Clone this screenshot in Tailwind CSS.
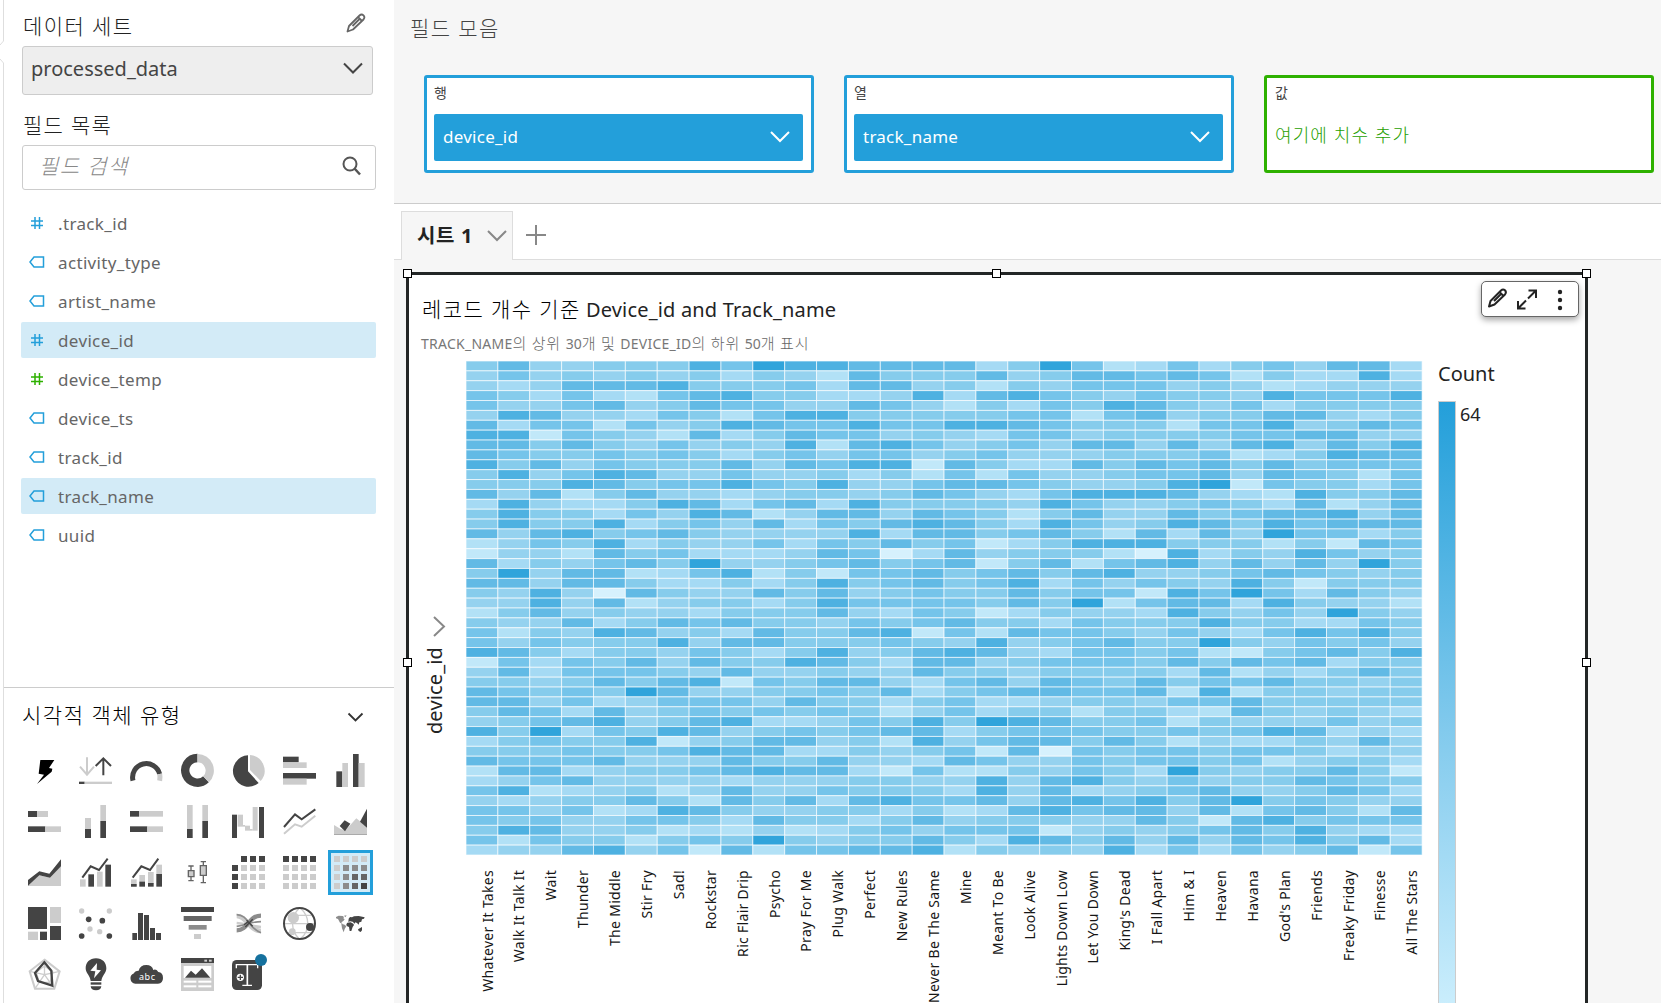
<!DOCTYPE html>
<html lang="ko">
<head>
<meta charset="utf-8">
<title>Analysis</title>
<script src="https://cdn.jsdelivr.net/npm/@tailwindcss/browser@4"></script>
</head>
<body class="w-[1661px] h-[1003px] overflow-hidden bg-white flex font-['Noto_Sans','Noto_Sans_CJK_KR',sans-serif] text-[#232323]">

<!-- Left panel -->
<aside class="relative w-[394px] h-full shrink-0 flex flex-col">
  <svg class="absolute left-0 top-0" width="6" height="1003" fill="none" stroke="#dedede"><path d="M3.5 0V41L0 45M0 59L3.5 63V1003"/></svg>

  <section class="h-[687px] pl-[22px] flex flex-col">
    <div class="h-[46px] pl-px pr-[28px] flex items-center justify-between">
      <h2 class="text-[21px] leading-none font-light tracking-[1.4px] text-[#222] mt-1.5">데이터 세트</h2>
      <svg width="20" height="20" class="-mt-px" fill="none" stroke="#666" stroke-width="1.800" stroke-linejoin="round"><path d="M1.5 18.5L3 13L13.500 2.500Q15.500 0.500 17.500 2.300Q19.300 4.200 17.500 6.500L7 16.500ZM12.500 4.500L15.500 7.500M6.500 13L13.500 6"/></svg>
    </div>
    <button class="w-[351px] h-[49px] border border-[#ccc] rounded-[3px] bg-[#eee] flex items-center justify-between pl-[8px] pr-[9px]">
      <span class="text-[20px] leading-none text-[#444] -mt-1">processed_data</span>
      <svg width="20" height="13" class="-mt-1" fill="none" stroke="#444" stroke-width="2"><path d="M1 1.500L10 10.500L19 1.500"/></svg>
    </button>
    <h2 class="h-[50px] pl-px pt-[20px] text-[21px] leading-none font-light tracking-[1.3px] text-[#222]">필드 목록</h2>
    <div class="w-[354px] h-[45px] border border-[#ccc] rounded-[3px] flex items-center justify-between pl-4 pr-[14px]">
      <span class="text-[21px] leading-none font-light italic tracking-[1.4px] text-[#888] -mt-0.5">필드 검색</span>
      <svg width="19" height="20" class="-mt-1" fill="none" stroke="#555" stroke-width="2"><circle cx="8" cy="8" r="6.500"/><path d="M12.500 12.500L18 18.500" stroke-width="2.500"/></svg>
    </div>
    <ul id="fields" class="mt-[15px] -ml-px w-[355px] flex flex-col gap-[3px] text-[17px] text-[#666]"></ul>
  </section>

  <section class="ml-1 border-t border-[#ccc] flex-1 flex flex-col">
    <div class="h-[60px] pl-[18px] pr-[30px] flex items-center justify-between">
      <h2 class="text-[21px] leading-none font-light tracking-[1.5px] text-black -mt-[5px]">시각적 객체 유형</h2>
      <svg width="17" height="11" class="-mt-px" fill="none" stroke="#333" stroke-width="1.800"><path d="M1.500 1.500L8.500 8.500L15.500 1.500"/></svg>
    </div>
    <div id="types" class="ml-[18px] w-[357px] grid grid-cols-7"></div>
  </section>
</aside>

<!-- Workspace -->
<main class="flex-1 h-full flex flex-col bg-[#f6f6f6]">
  <header class="h-[204px] shrink-0 border-b border-[#ccc] pl-[30px] pr-[7px]">
    <h2 class="h-[75px] pt-[18px] -ml-[14px] text-[21px] leading-none font-light tracking-[1.4px] text-[#444]">필드 모음</h2>
    <div class="grid grid-cols-3 gap-[30px]">
      <div class="h-[98px] border-[3px] border-[#239fda] rounded-[3px] bg-white px-[7px]">
        <div class="h-9 pt-[6px] text-[14px] leading-[17px] text-[#444]">행</div>
        <div class="h-[47px] w-[369px] rounded-[2px] bg-[#239fda] text-white flex items-center justify-between pl-[9px] pr-[13px]">
          <span class="text-[17px] leading-none tracking-[0.25px] -mt-0.5">device_id</span>
          <svg width="20" height="12" fill="none" stroke="#fff" stroke-width="2" class="-mt-0.5"><path d="M1 1L10 10L19 1"/></svg>
        </div>
      </div>
      <div class="h-[98px] border-[3px] border-[#239fda] rounded-[3px] bg-white px-[7px]">
        <div class="h-9 pt-[6px] text-[14px] leading-[17px] text-[#444]">열</div>
        <div class="h-[47px] w-[369px] rounded-[2px] bg-[#239fda] text-white flex items-center justify-between pl-[9px] pr-[13px]">
          <span class="text-[17px] leading-none tracking-[0.25px] -mt-0.5">track_name</span>
          <svg width="20" height="12" fill="none" stroke="#fff" stroke-width="2" class="-mt-0.5"><path d="M1 1L10 10L19 1"/></svg>
        </div>
      </div>
      <div class="h-[98px] border-[3px] border-[#2eb100] rounded-[3px] bg-white px-[7px]">
        <div class="h-9 pt-[6px] pl-px text-[14px] leading-[17px] text-[#444]">값</div>
        <div class="h-[47px] flex items-center pl-px text-[18px] leading-none font-light tracking-[1.1px] text-[#26a000]"><span class="-mt-1.5">여기에 치수 추가</span></div>
      </div>
    </div>
  </header>

  <nav class="h-[56px] shrink-0 bg-white border-b border-[#ddd] flex items-end pl-[7px]">
    <div class="w-[112px] h-[49px] -mb-px bg-[#f6f6f6] border border-b-0 border-[#ddd] flex items-center justify-between pl-[15px] pr-[5px]">
      <span class="text-[20px] leading-none font-bold tracking-[0.7px] whitespace-nowrap">시트 1</span>
      <svg width="20" height="12" fill="none" stroke="#888" stroke-width="2"><path d="M1 1L10 10L19 1"/></svg>
    </div>
    <svg class="ml-[13px] mb-[14px]" width="20" height="20" stroke="#888" stroke-width="2"><path d="M10 0V20M0 10H20"/></svg>
  </nav>

  <section class="relative mt-3 ml-3 w-[1182px] h-[740px] shrink-0 border-[3px] border-b-0 border-[#232626] bg-white">
    <i class="absolute left-[-6px] top-[-6px] size-[9px] border border-black bg-white"></i>
    <i class="absolute left-[583px] top-[-6px] size-[9px] border border-black bg-white"></i>
    <i class="absolute right-[-6px] top-[-6px] size-[9px] border border-black bg-white"></i>
    <i class="absolute left-[-6px] top-[383px] size-[9px] border border-black bg-white"></i>
    <i class="absolute right-[-6px] top-[383px] size-[9px] border border-black bg-white"></i>

    <div class="absolute right-[6px] top-[6px] w-[98px] h-9 rounded-[5px] border border-[#666] bg-white shadow-[0_3px_6px_rgba(0,0,0,0.35)] flex items-center">
      <svg width="96" height="34" fill="none" stroke="#232323" stroke-width="2"><path stroke-linejoin="round" d="M7 24.500L8.500 19L19 8.500Q21 6.500 23 8.300Q24.800 10.200 23 12.500L12.500 22.500ZM18 10.500L21 13.500M12 19L19 12"/><path d="M46.500 8.500H54V16M53.500 9L46 16.500M36 19V26.500H43.500M36.500 26L44 18.500"/><g fill="#232323" stroke="none"><circle cx="78" cy="10" r="2.200"/><circle cx="78" cy="18" r="2.200"/><circle cx="78" cy="26" r="2.200"/></g></svg>
    </div>

    <h3 class="h-[52px] pt-[24px] pl-[13px] text-[20px] leading-none whitespace-nowrap"><span class="font-light text-[21px] tracking-[1.4px] text-black">레코드 개수 기준</span> <span class="tracking-[0.17px]">Device_id and Track_name</span></h3>
    <p class="h-[34px] pt-[9px] pl-3 text-[14px] leading-none whitespace-nowrap text-[#777]"><span class="tracking-[0.25px]">TRACK_NAME</span><span class="text-[15px] tracking-[0.8px] font-light text-[#666]">의 상위 </span>30<span class="text-[15px] tracking-[0.8px] font-light text-[#666]">개 및 </span><span class="tracking-[0.25px]">DEVICE_ID</span><span class="text-[15px] tracking-[0.8px] font-light text-[#666]">의 하위 </span>50<span class="text-[15px] tracking-[0.8px] font-light text-[#666]">개 표시</span></p>
    <svg id="chart" class="block" width="1176" height="650"></svg>
  </section>
</main>

<script>
const HASH = c => `<svg width="14" height="14" fill="none" stroke="${c}" stroke-width="1.500"><path d="M5 1V13M9.500 1V13M1 5H13M1 9.500H13"/></svg>`;
const TAG = `<svg width="16" height="12" fill="none" stroke="#239fda" stroke-width="1.500"><path d="M5 1H14.500V11H5L1 6Z"/></svg>`;
const FIELDS = [['.track_id','b'],['activity_type','t'],['artist_name','t'],['device_id','b',1],['device_temp','g'],['device_ts','t'],['track_id','t'],['track_name','t',1],['uuid','t']];
document.getElementById('fields').innerHTML = FIELDS.map(([n,k,on]) =>
  `<li class="h-9 flex items-center rounded-[2px] ${on ? 'bg-[#d3ebf7]' : ''}"><span class="w-[37px] flex justify-start ${k==='t' ? 'pl-2' : 'pl-[9px]'}">${k==='t' ? TAG : HASH(k==='g' ? '#2eb100' : '#239fda')}</span><span class="leading-none tracking-[0.35px] pt-px">${n}</span></li>`).join('');

const D='#444', L='#ccc', M='#8c8c8c', K='#646464';
const r=(x,y,w,h,c)=>`<rect x="${x}" y="${y}" width="${w}" height="${h}" fill="${c}"/>`;
const ci=(x,y,q,c)=>`<circle cx="${x}" cy="${y}" r="${q}" fill="${c}"/>`;
const ln=(d,c,w)=>`<path d="${d}" fill="none" stroke="${c}" stroke-width="${w}"/>`;
const pa=(d,c)=>`<path d="${d}" fill="${c}"/>`;
const grid=f=>{let s='';for(let y=0;y<4;y++)for(let x=0;x<4;x++){const c=f(y,x);if(c)s+=r(x*27,y*27,18,18,c);}return s;};
const ICONS=[
 pa('M37 18H79L63 42L73 44L71 53L27 90L48 62L32 59Z','#000'),
 ln('M24 10V62M3 38L24 62L45 38',L,6)+ln('M73 64V14M50 36L73 13L96 36',D,6)+r(0,83,17,7,D)+r(17,83,82,7,L),
 ln('M9 80A41 41 0 1 1 89 60',D,15)+ln('M89 60Q91 70 89 80',L,15),
 ln('M49.500 12A37 37 0 1 0 75 76',D,25)+ln('M49.500 12.500A37 37 0 0 1 75 76',L,25),
 pa('M48 4A47 47 0 1 0 80 87L48 52Z',D)+pa('M54 3A47 47 0 0 1 86 81L54 48Z',L),
 r(0,8,47,17,D)+r(0,25,71,17,L)+r(0,57,99,17,D)+r(0,74,71,18,L),
 r(7,52,18,47,D)+r(25,27,17,72,L)+r(57,0,17,99,D)+r(74,27,18,72,L),
 r(0,18,27,18,D)+r(27,18,33,18,L)+r(0,64,52,17,D)+r(52,64,47,17,L),
 r(18,39,18,33,L)+r(18,72,18,27,D)+r(64,0,17,48,L)+r(64,48,17,51,D),
 r(0,18,27,17,D)+r(27,18,72,17,L)+r(0,64,52,17,D)+r(52,64,47,17,L),
 r(18,0,17,72,L)+r(18,72,17,27,D)+r(64,0,17,48,L)+r(64,48,17,51,D),
 r(0,29,15,70,D)+r(17,29,16,36,L)+r(33,60,6,5,L)+r(39,62,15,15,L)+r(54,72,8,5,L)+r(62,6,15,71,L)+r(81,6,15,93,D),
 ln('M3 86L36 58L56 65L97 32',L,6)+ln('M3 66L36 28L56 43L97 13',D,6),
 pa('M0 60L20 72L35 76L67 40L99 66V90H0Z',L)+pa('M17 63L32 46L49 56L33 79Z',D)+pa('M78 50L99 11V68Z',D)+r(0,87,99,3,'#aaa'),
 pa('M0 88L34 58L66 65L99 30V90H0Z',L)+pa('M0 72L34 46L64 53L99 10V31L66 65L34 58L0 89Z',D),
 r(3,70,17,22,L)+r(28,55,17,37,D)+r(54,47,17,45,L)+r(79,26,17,66,D)+ln('M10 65L35 31L60 42L86 8',D,6),
 r(3,70,17,22,L)+r(3,84,17,8,D)+r(28,57,17,22,L)+r(28,77,17,15,D)+r(54,48,17,35,L)+r(54,81,17,11,D)+r(79,26,17,30,L)+r(79,54,17,38,D)+ln('M8 65L34 31L60 42L85 8',D,6),
 ln('M30 30V74M22 30H38M22 74H38M67 17V80M59 17H75M59 80H75',K,4)+`<g fill="#ccc" stroke="#646464" stroke-width="4"><path d="M22 44H39V62H22ZM58 29H76V58H58Z"/></g>`,
 grid((y,x)=>y==0&&x==0?'':(y==0||x==0)?D:L),
 grid((y,x)=>y==0?D:L),
 grid((y,x)=>y==0||x==0?L:[[M,M,M],[M,K,K],[M,K,D]][y-1][x-1]),
 r(0,0,57,66,D)+r(66,0,33,48,L)+r(66,57,33,42,D)+r(0,74,30,25,L)+r(36,74,21,25,D),
 ci(8,12,8,L)+ci(91,12,8,L)+ci(33,66,8,L)+ci(62,74,8,L)+ci(29,37,8.5,D)+ci(70,41,8.5,D)+ci(8,87,8.5,D)+ci(91,87,8.5,D),
 r(7,78,14,21,D)+r(24,18,15,81,D)+r(42,24,15,75,D)+r(60,63,15,36,D)+r(78,78,15,21,D),
 r(0,0,99,15,D)+r(8,27,84,15,K)+r(23,54,54,14,M)+r(39,81,21,15,L),
 ln('M14 27C45 27 50 72 87 72',L,14)+ln('M14 48C45 50 55 58 87 60',L,8)+ln('M14 70C50 70 48 26 87 26',M,13)+ln('M14 23C50 24 48 64 87 77',M,5)+ln('M14 58C45 54 55 44 87 44',M,5)+ln('M40 60L62 37M44 40L62 58M36 53L48 44',D,4),
 ln('M4 50H95M14 25H85M14 77H85M49 3C22 30 22 70 49 96M52 3C82 30 82 70 52 96',L,4)+ci(31,32,17,L)+ci(28,74,10,L)+ci(81,60,12,D)+`<circle cx="49.500" cy="49.500" r="46.500" fill="none" stroke="#444" stroke-width="6"/>`,
 pa('M6 30L14 26L26 27L30 30L28 34L32 37L28 42L22 46L26 51L18 47L12 36L6 34ZM30 26L38 25L34 31ZM22 50L32 53L37 58L32 66L29 76L24 64Z',M)+pa('M44 35L48 30L54 31L60 28L74 27L92 31L90 35L84 37L82 44L76 46L74 53L69 48L64 46L62 50L56 44L48 43L43 45ZM40 47L50 46L58 50L60 54L56 60L52 72L47 72L45 60L38 57L37 52ZM72 67L80 62L84 60L84 70L80 75L74 72Z',D),
 `<g fill="none" stroke="#ccc" stroke-width="6"><path d="M49.500 5L95 40L79 92H21L5 40Z"/><path d="M49.500 24L75 43L66 73H34L25 43ZM49.500 5V50L95 40M49.500 50L79 92M49.500 50L21 92M49.500 50L5 40" stroke-width="4"/></g>`+`<path d="M49 13L70 38L73 83L30 69L21 45Z" fill="none" stroke="#444" stroke-width="7"/>`,
 pa('M51 1C32 1 20 14 20 31C20 46 33 52 35 69H67C69 52 82 46 82 31C82 14 70 1 51 1Z',D)+pa('M54 15L34 38L49 40L45 61L66 37L53 35Z','#fff')+r(35,73,32,7,D)+pa('M35 85H67Q66 97 51 97Q36 97 35 85Z',D),
 pa('M16 77A16 16 0 0 1 12 46Q14 38 26 38Q30 21 49 21Q66 21 70 36Q78 32 85 42Q99 44 99 60Q99 76 84 77Z',D)+`<text x="51" y="66" fill="#fff" font-size="27" text-anchor="middle" textLength="48">abc</text>`,
 r(0,0,99,99,L)+r(0,0,99,15,D)+r(70,5,8,6,L)+r(84,5,8,6,L)+r(8,24,83,36,'#fff')+pa('M12 59L30 38L44 50L63 31L88 59Z',D)+r(8,68,38,6,'#fff')+r(52,68,39,6,'#fff')+r(8,82,38,6,'#fff')+r(52,82,39,6,'#fff'),
 `<rect y="6" width="90" height="90" rx="14" fill="#444"/>`+ln('M13 31V20H77V31M31 82H60','#fff',4)+ln('M46 20V81','#fff',5)+ci(25,58,11,'#fff')+ln('M25 50V66M17 58H33',D,4)+ci(87,6,18,'#16719e')
];
document.getElementById('types').innerHTML = ICONS.map((s,i)=>
  `<div class="size-[51px] flex"><div class="size-[45px] flex items-center justify-center ${i===20?'border-[3px] border-[#239fda] bg-[#d3ebf7]':''}"><svg class="overflow-visible shrink-0" width="33" height="33" viewBox="0 0 99 99">${s}</svg></div></div>`).join('');

const ROWS=`574455586988777735962363564773
464545453542755574577676253383
434777855563774525466645423444
653632678553348378654655486668
644674576644764253658754635555
487443652688555556626745577435
736626458766866887655526684576
881654273576645436645555667744
775754645482786456477474784758
765565653564664564445556235877
857465557476881753375767575666
584687446445352626445667476526
555875668658446776544589165536
747257443455457643688874328557
384335873673855554864456537247
585536487247747652574475677847
585583564736578753864587586777
747856754444837756752737496635
246583544636575613588855525176
144275633347603745552083548645
735467594456756715726784747495
594772368251667567578445676545
774775335358567568364654851555
548407544757456557566186963754
448472455358666657592677385442
257454435557436513544385464954
544735767554656755365558553365
625487453755781627665464368685
646555847755565484567559546564
875355465358457874366562156758
163657475587537745666575767355
473666547445447554555537243575
554575781657743674765756675545
765659744556573567766728255455
774634666475535633455466755555
576374565656524635525532754543
456784578334658598755625444645
859365874565677356665565687343
356558145774528467757524335474
555655687733545617065665665344
766674447557443764465665624553
277345567877316225465395455751
346744443444554484785464557655
682345247446555384734567445763
434557527573786674786857956544
664623875445535237867747267527
656446653755357455544751785666
587445232423564666145456758433
626552565954557538757474768573
344784617266778254548363645716`.split('\n');
const PAL=['#d6f1fd','#c1e8f9','#b2e1f6','#a5daf4','#95d2ef','#86ccec','#75c4ea','#62bae5','#4eb1e1','#30a4db'];
const NAMES=["Whatever It Takes","Walk It Talk It","Wait","Thunder","The Middle","Stir Fry","Sad!","Rockstar","Ric Flair Drip","Psycho","Pray For Me","Plug Walk","Perfect","New Rules","Never Be The Same","Mine","Meant To Be","Look Alive","Lights Down Low","Let You Down","King's Dead","I Fall Apart","Him & I","Heaven","Havana","God's Plan","Friends","Freaky Friday","Finesse","All The Stars"];
const PX=31.87, PY=9.88, X0=57;
let s=`<defs><linearGradient id="scale" x1="0" y1="0" x2="0" y2="1"><stop offset="0" stop-color="#239fda"/><stop offset="0.5" stop-color="#82caed"/><stop offset="0.93" stop-color="#cdeffd"/><stop offset="1" stop-color="#d8f3fe"/></linearGradient></defs><g stroke="#fff" stroke-opacity="0.65" stroke-width="1">`;
ROWS.forEach((row,y)=>[...row].forEach((v,x)=>{s+=`<rect x="${(X0+x*PX).toFixed(2)}" y="${(y*PY).toFixed(2)}" width="${PX}" height="${PY}" fill="${PAL[v]}"/>`;}));
s+='</g><g font-size="14" fill="#161616" text-anchor="end" letter-spacing="0.3">';
NAMES.forEach((n,i)=>{s+=`<text transform="translate(${(83.5+i*(PX+0.02)).toFixed(1)} 509) rotate(-90)">${n.replace('&','&amp;')}</text>`;});
s+=`</g><text transform="translate(33 286) rotate(-90)" font-size="20" letter-spacing="0.15" fill="#232323" text-anchor="end">device_id</text>
<path d="M25 256L35 265.500L25 275" fill="none" stroke="#888" stroke-width="2"/>
<text x="1029" y="20" font-size="20" fill="#232323">Count</text>
<rect x="1029.500" y="40.500" width="17" height="660" fill="url(#scale)" stroke="#ccc"/>
<text x="1051" y="60" font-size="18" fill="#232323">64</text>`;
document.getElementById('chart').innerHTML=s;
</script>
</body>
</html>
